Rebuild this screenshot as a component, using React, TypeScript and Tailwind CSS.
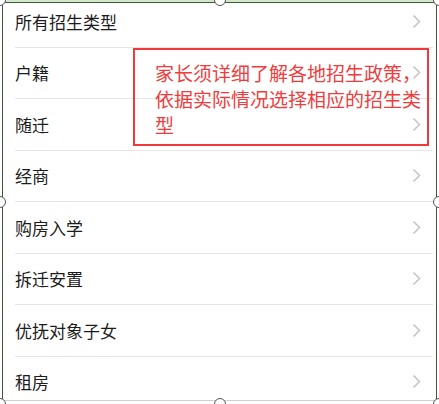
import React from 'react';

const rows = ['所有招生类型', '户籍', '随迁', '经商', '购房入学', '拆迁安置', '优抚对象子女', '租房'];

function Chevron() {
  return (
    <svg width="9" height="15" viewBox="0 0 9 15" fill="none">
      <path d="M1.5 1.5L7.5 7.5L1.5 13.5" stroke="#c6c6c6" strokeWidth="1.6" />
    </svg>
  );
}

function Handle({ hidden }: { hidden?: boolean }) {
  return <div className={`w-[12px] h-[12px] rounded-full bg-white border border-[#555] ${hidden ? 'invisible' : ''}`} />;
}

export default function App() {
  return (
    <div className="relative w-[439px] h-[404px] overflow-hidden bg-white" style={{ fontFamily: '"Noto Sans CJK SC", "Noto Sans", sans-serif' }}>
      <div className="h-[2px] bg-[#d3e8cb]" />
      <div className="mx-[2px] h-[399px] border-x border-t border-[#3d5a36] overflow-hidden border-b border-b-[#cfcfcf]">
        <div className="ml-[12px] mr-[3px] -mt-[7px]">
          {rows.map((r) => (
            <div key={r} className="flex items-center justify-between h-[51.5px] border-b border-[#e6e6e6]">
              <span className="text-[17px] text-[#1c1c1c] leading-none">{r}</span>
              <span className="mr-[12px] flex"><Chevron /></span>
            </div>
          ))}
        </div>
      </div>

      {/* annotation box */}
      <div className="absolute left-[133px] top-[48px] w-[296px] h-[98px] border-[2.5px] border-[#f2383a] pl-[20px] pr-[2px] pt-[10px]">
        <p className="text-[19px] leading-[26px] text-[#f03c3c] [text-spacing-trim:space-all]">家长须详细了解各地招生政策，依据实际情况选择相应的招生类型</p>
      </div>

      {/* selection handles */}
      <div className="absolute -inset-[6px] flex flex-col justify-between pointer-events-none">
        <div className="flex justify-between"><Handle /><Handle /><Handle /></div>
        <div className="flex justify-between"><Handle /><Handle hidden /><Handle /></div>
        <div className="flex justify-between"><Handle /><Handle /><Handle /></div>
      </div>
    </div>
  );
}
